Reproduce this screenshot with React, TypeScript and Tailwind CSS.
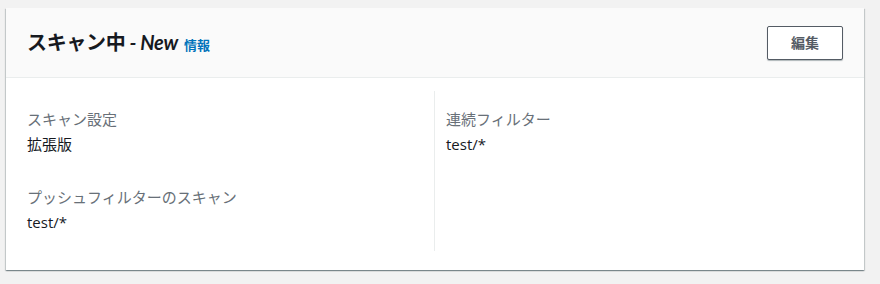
const font = {
  fontFamily: '"Open Sans", "Noto Sans CJK JP", sans-serif',
};

const Field: React.FC<{ label: string; value: string }> = ({ label, value }) => (
  <div>
    <div className="text-[15px] leading-[25px] text-[#687078]">{label}</div>
    <div className="text-[15px] leading-[25px] text-[#16191f]">{value}</div>
  </div>
);

export default function App() {
  return (
    <div
      className="w-[880px] h-[284px] bg-[#f2f2f2] pt-[8px] pl-[6px]"
      style={font}
    >
      <div className="w-[858px] h-[262px] bg-white shadow-[0_1px_1px_0_rgba(0,28,36,0.3),1px_1px_1px_0_rgba(0,28,36,0.15),-1px_1px_1px_0_rgba(0,28,36,0.15)]">
        <div className="h-[70px] bg-[#fafafa] border-b border-[#eaeded] flex items-center justify-between pl-[21px] pr-[21px]">
          <div className="flex items-baseline">
            <h2
              className="text-[20px] leading-[26px] font-bold text-[#16191f] tracking-[-0.3px]"
              style={{ fontFamily: '"Lato", "Noto Sans CJK JP", sans-serif' }}
            >
              スキャン中
              <span className="italic"> - New</span>
            </h2>
            <a className="ml-[6px] text-[13px] font-bold text-[#0073bb]">
              情報
            </a>
          </div>
          <button className="h-[34px] px-[23px] bg-white border border-[#545b64] rounded-[2px] text-[14px] font-bold text-[#545b64] shadow-[0_1px_1px_0_rgba(0,28,36,0.3)]">
            編集
          </button>
        </div>
        <div className="grid grid-cols-2 pl-[21px] pr-[21px] pt-[13px]">
          <div className="pt-[16px] pb-[16px] flex flex-col gap-[28px]">
            <Field label="スキャン設定" value="拡張版" />
            <Field label="プッシュフィルターのスキャン" value="test/*" />
          </div>
          <div className="pt-[16px] pb-[16px] pl-[11px] border-l border-[#eaeded] -ml-[1px]">
            <Field label="連続フィルター" value="test/*" />
          </div>
        </div>
      </div>
    </div>
  );
}
